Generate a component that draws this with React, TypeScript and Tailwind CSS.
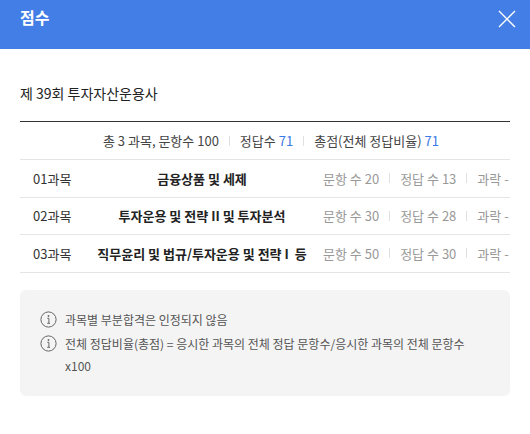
import React from "react";

const Sep = () => <span className="inline-block w-px h-[10px] bg-[#e0e0e0] mx-[10px]" />;

const Info = () => (
  <svg width="17" height="17" viewBox="0 0 17 17" className="shrink-0 mt-[2px]">
    <circle cx="8.5" cy="8.5" r="7.6" fill="none" stroke="#666" strokeWidth="1" />
    <circle cx="8.5" cy="5" r="0.9" fill="#666" />
    <path d="M7.3 7.3h1.6v5M7.2 12.3h2.8" fill="none" stroke="#666" strokeWidth="1" />
  </svg>
);

const rows = [
  ["01과목", "금융상품 및 세제", "20", "13"],
  ["02과목", "투자운용 및 전략 II 및 투자분석", "30", "28"],
  ["03과목", "직무윤리 및 법규/투자운용 및 전략 I  등", "50", "30"],
];

export default function App() {
  return (
    <div className="w-[530px] h-[434px] bg-white" style={{ fontFamily: "'Noto Sans CJK KR', 'Noto Sans', sans-serif" }}>
      <div className="h-[49px] bg-[#437de6] flex items-start justify-between px-[20px] pt-[5px]">
        <span className="text-white font-bold text-[16px]">점수</span>
        <svg width="18" height="18" viewBox="0 0 18 18" className="mt-[5px] mr-[-6px]">
          <path d="M1 1L17 17M17 1L1 17" stroke="white" strokeWidth="1.4" />
        </svg>
      </div>
      <div className="px-[20px]">
        <div className="text-[14px] text-[#222] mt-[34px] mb-[18px] leading-[20px]">제 39회 투자자산운용사</div>
        <div className="border-t border-[#333]">
          <div className="h-[38px] flex items-center justify-center text-[13px] text-[#444] border-b border-[#e5e5e5] pl-[12px]">
            총 3 과목, 문항수 100<Sep />정답수 <span className="text-[#3b7ae6] ml-[3px]">71</span><Sep />총점(전체 정답비율) <span className="text-[#3b7ae6] ml-[3px]">71</span>
          </div>
          {rows.map((r) => (
            <div key={r[0]} className="h-[37.5px] flex items-center text-[13px] border-b border-[#e5e5e5]">
              <span className="w-[70px] pl-[13px] text-[#333]">{r[0]}</span>
              <span className="w-[224px] text-center font-bold text-[#222] whitespace-pre">{r[1]}</span>
              <span className="text-[#999] flex items-center ml-[9px]">
                문항 수 {r[2]}<Sep />정답 수 {r[3]}<Sep />과락 -
              </span>
            </div>
          ))}
        </div>
        <div className="mt-[17px] bg-[#f4f4f4] rounded-[6px] h-[106px] pl-[20px] pr-[20px] pt-[19px] text-[12px] text-[#555] leading-[22px]">
          <div className="flex gap-[8px]"><Info /><span>과목별 부분합격은 인정되지 않음</span></div>
          <div className="flex gap-[8px] mt-[2px]"><Info /><span>전체 정답비율(총점) = 응시한 과목의 전체 정답 문항수/응시한 과목의 전체 문항수 x100</span></div>
        </div>
      </div>
    </div>
  );
}
